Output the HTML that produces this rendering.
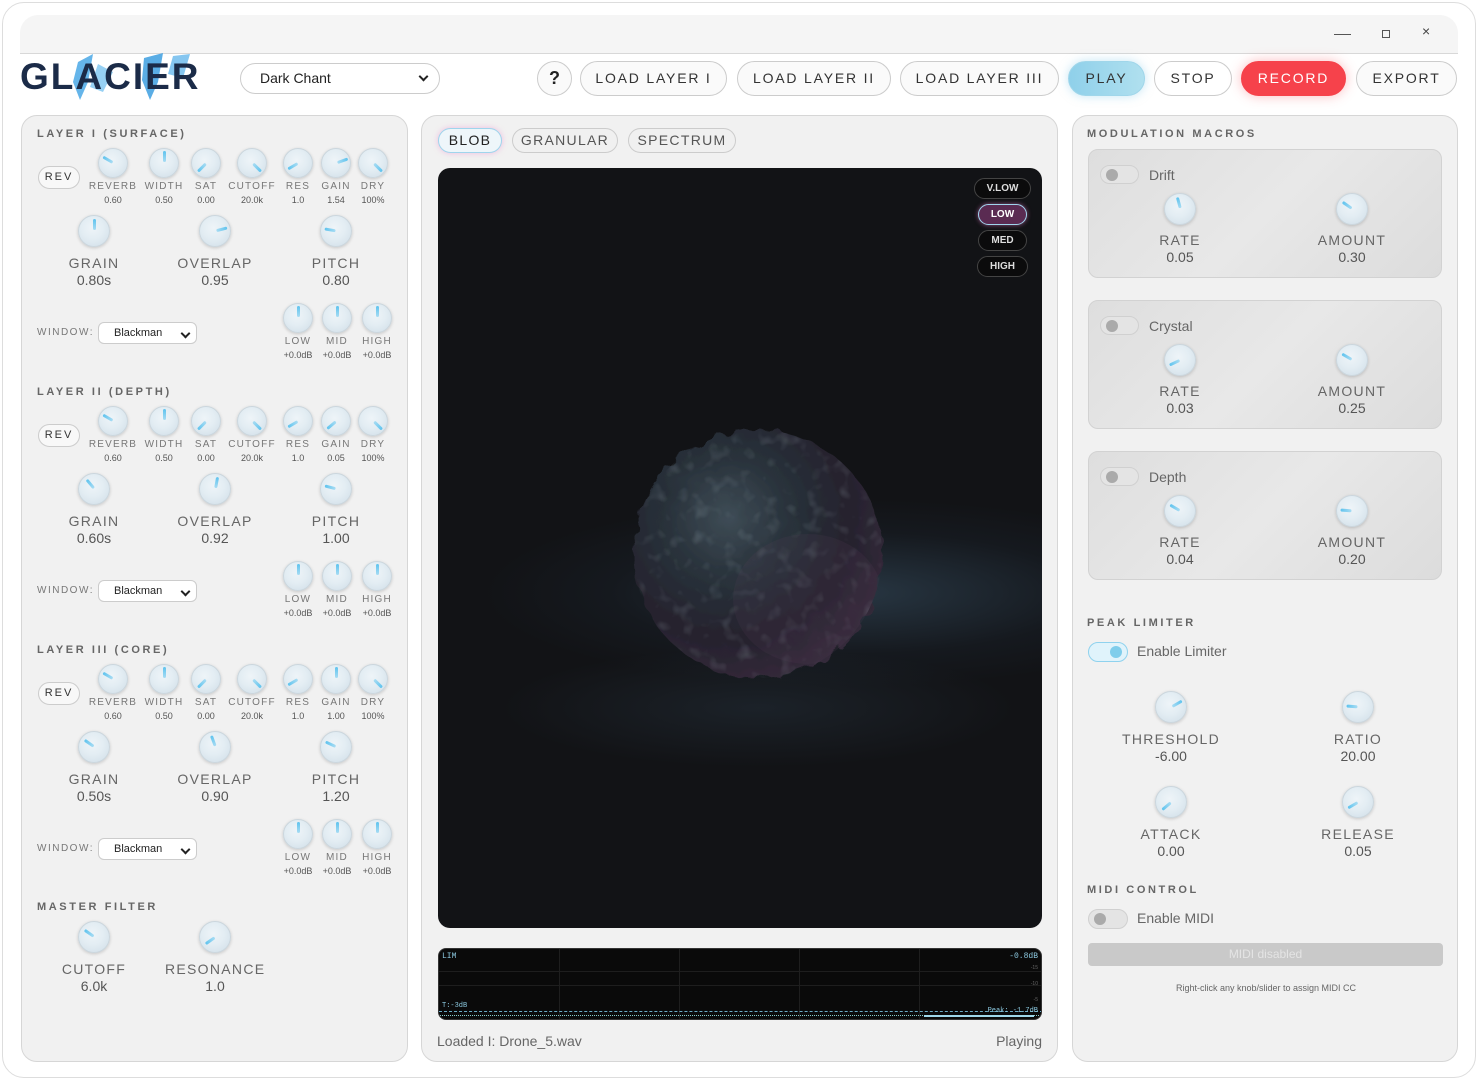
<!DOCTYPE html>
<html><head><meta charset="utf-8">
<style>
*{box-sizing:border-box;margin:0;padding:0}
body{width:1478px;height:1080px;background:#fff;font-family:"Liberation Sans",sans-serif;position:relative;overflow:hidden;color:#555}
.abs{position:absolute}
.frame{position:absolute;left:2px;top:2px;width:1474px;height:1076px;border:1px solid #ddd;border-radius:22px;background:#fff}
.chrome{position:absolute;left:20px;top:15px;width:1438px;height:39px;background:#f5f5f5;border-bottom:1px solid #d8d8d8;border-radius:18px 18px 0 0}
.btn{position:absolute;top:61px;height:35px;border:1px solid #ccc;border-radius:18px;background:#fafafa;font-size:14px;letter-spacing:1.8px;color:#333;text-align:center;line-height:33px}
.panel{position:absolute;top:115px;height:947px;background:#f1f1f1;border:1px solid #d6d6d6;border-radius:16px;overflow:hidden}
.ttl{position:absolute;font-size:11px;font-weight:bold;letter-spacing:2.6px;color:#666}
.k{width:30px;height:30px;border-radius:50%;margin:0 auto;position:relative;background:radial-gradient(circle at 45% 40%,#eef4f8 0,#e3edf3 45%,#cfdde7 100%);border:1px solid #cbd6dd;box-shadow:0 1px 3px rgba(0,0,0,.18)}
.k.b{width:32px;height:32px}
.k i{position:absolute;left:50%;top:50%;width:3px;height:11px;margin-left:-1.5px;margin-top:-12px;background:linear-gradient(#5ec3ee,#a8dcf3);border-radius:2px;transform-origin:50% 12px}
.g{position:absolute;width:80px;text-align:center}
.g .l{font-size:10px;letter-spacing:1.2px;color:#777;margin-top:3px;line-height:12px}
.g .v{font-size:9px;color:#555;line-height:12px;margin-top:1px}
.G{position:absolute;width:100px;text-align:center}
.G .l{font-size:14px;letter-spacing:1.3px;color:#666;margin-top:8px;line-height:17px}
.G .v{font-size:14px;color:#555;line-height:17px}
.rev{position:absolute;left:16px;top:50px;width:42px;height:23px;border:1px solid #ccc;border-radius:12px;background:#f8f8f8;font-size:11px;letter-spacing:2px;text-align:center;line-height:21px;color:#333}
.win{position:absolute;left:15px;top:211px;font-size:10px;letter-spacing:1.5px;color:#777}
.sel{position:absolute;left:76px;top:206px;width:99px;height:22px;border:1px solid #ccc;border-radius:6px;background:#fff;font-size:11px;color:#222;padding-left:15px;line-height:20px}
.chev{position:absolute;right:7px;top:7px;width:7px;height:7px;border-right:2px solid #222;border-bottom:2px solid #222;transform:rotate(45deg)}
.layer{position:absolute;left:0;width:386px;height:250px}
.card{position:absolute;left:15px;width:354px;height:129px;background:linear-gradient(135deg,#dedede,#e8e8e8 50%,#dcdcdc);border:1px solid #d2d2d2;border-radius:10px}
.tog{position:absolute;width:39px;height:19px;border-radius:10px;background:#e4e4e4;border:1px solid #d0d0d0}
.tog:after{content:"";position:absolute;left:5px;top:3px;width:12px;height:12px;border-radius:50%;background:#aaa}
.tog.on{background:#e0f3fb;border-color:#8fd2ee}
.tog.on:after{left:auto;right:5px;background:#7fcdeb}
.tab{position:absolute;top:12px;height:25px;border:1px solid #ccc;border-radius:13px;font-size:14px;letter-spacing:1.3px;text-align:center;line-height:23px;color:#555;background:#f0f0f0}
.q{position:absolute;height:21px;border:1px solid #444;border-radius:11px;background:#0b0b0c;color:#ddd;font-size:10px;font-weight:bold;text-align:center;line-height:19px}
</style></head><body>
<div class="frame"></div>
<div class="chrome">
 <div class="abs" style="left:1314px;top:19px;width:17px;height:1px;background:#555"></div>
 <div class="abs" style="left:1362px;top:15px;width:8px;height:8px;border:1px solid #555"></div>
 <div class="abs" style="left:1402px;top:8px;font-size:14px;color:#444">×</div>
</div>

<svg class="abs" style="left:18px;top:52px" width="190" height="52">
 <polygon points="60,10 75,2 70,30 62,48 55,30" fill="#4aa8e6" opacity=".85"/>
 <polygon points="80,12 95,20 85,40 72,35" fill="#7cc4f0" opacity=".8"/>
 <polygon points="126,6 145,1 140,30 132,48 124,28" fill="#3d9fe0" opacity=".85"/>
 <polygon points="155,4 172,2 165,26 150,22" fill="#66b8ec" opacity=".8"/>
 <text x="2" y="37" font-family="Liberation Sans" font-weight="bold" font-size="37" fill="#1b2b48" letter-spacing="2">GLACIER</text>
</svg>
<div class="abs" style="left:240px;top:63px;width:200px;height:31px;border:1px solid #ccc;border-radius:16px;background:#fff;font-size:14px;color:#222;padding-left:19px;line-height:29px">Dark Chant<div class="chev" style="top:9px;right:12px"></div></div>

<div class="btn" style="left:537px;width:35px;font-size:18px;letter-spacing:0;font-weight:bold;color:#222">?</div>
<div class="btn" style="left:580px;width:147px">LOAD LAYER I</div>
<div class="btn" style="left:737px;width:154px">LOAD LAYER II</div>
<div class="btn" style="left:900px;width:159px">LOAD LAYER III</div>
<div class="btn" style="left:1068px;width:77px;background:linear-gradient(90deg,#8fd0ea,#b0e0ef);border-color:#a0d6ea;box-shadow:0 0 10px rgba(140,205,235,.5)">PLAY</div>
<div class="btn" style="left:1154px;width:78px;background:#fff">STOP</div>
<div class="btn" style="left:1241px;width:105px;background:#f6424b;border-color:#f6424b;color:#fff;box-shadow:0 0 12px rgba(246,66,75,.35)">RECORD</div>
<div class="btn" style="left:1356px;width:101px">EXPORT</div>

<div class="panel" style="left:21px;width:387px">
 <div class="layer" style="top:0">
  <div class="ttl" style="left:15px;top:12px">LAYER I (SURFACE)</div>
  <div class="rev">REV</div>
  <div class="g" style="left:51px;top:32px"><div class="k"><i style="transform:rotate(-60deg)"></i></div><div class="l">REVERB</div><div class="v">0.60</div></div>
  <div class="g" style="left:102px;top:32px"><div class="k"><i></i></div><div class="l">WIDTH</div><div class="v">0.50</div></div>
  <div class="g" style="left:144px;top:32px"><div class="k"><i style="transform:rotate(-135deg)"></i></div><div class="l">SAT</div><div class="v">0.00</div></div>
  <div class="g" style="left:190px;top:32px"><div class="k"><i style="transform:rotate(135deg)"></i></div><div class="l">CUTOFF</div><div class="v">20.0k</div></div>
  <div class="g" style="left:236px;top:32px"><div class="k"><i style="transform:rotate(-120deg)"></i></div><div class="l">RES</div><div class="v">1.0</div></div>
  <div class="g" style="left:274px;top:32px"><div class="k"><i style="transform:rotate(70deg)"></i></div><div class="l">GAIN</div><div class="v">1.54</div></div>
  <div class="g" style="left:311px;top:32px"><div class="k"><i style="transform:rotate(135deg)"></i></div><div class="l">DRY</div><div class="v">100%</div></div>
  <div class="G" style="left:22px;top:99px"><div class="k b"><i></i></div><div class="l">GRAIN</div><div class="v">0.80s</div></div>
  <div class="G" style="left:143px;top:99px"><div class="k b"><i style="transform:rotate(75deg)"></i></div><div class="l">OVERLAP</div><div class="v">0.95</div></div>
  <div class="G" style="left:264px;top:99px"><div class="k b"><i style="transform:rotate(-80deg)"></i></div><div class="l">PITCH</div><div class="v">0.80</div></div>
  <div class="win">WINDOW:</div><div class="sel">Blackman<div class="chev"></div></div>
  <div class="g" style="left:236px;top:187px"><div class="k"><i></i></div><div class="l">LOW</div><div class="v">+0.0dB</div></div>
  <div class="g" style="left:275px;top:187px"><div class="k"><i></i></div><div class="l">MID</div><div class="v">+0.0dB</div></div>
  <div class="g" style="left:315px;top:187px"><div class="k"><i></i></div><div class="l">HIGH</div><div class="v">+0.0dB</div></div>
 </div>
 <div class="layer" style="top:258px">
  <div class="ttl" style="left:15px;top:12px">LAYER II (DEPTH)</div>
  <div class="rev">REV</div>
  <div class="g" style="left:51px;top:32px"><div class="k"><i style="transform:rotate(-60deg)"></i></div><div class="l">REVERB</div><div class="v">0.60</div></div>
  <div class="g" style="left:102px;top:32px"><div class="k"><i></i></div><div class="l">WIDTH</div><div class="v">0.50</div></div>
  <div class="g" style="left:144px;top:32px"><div class="k"><i style="transform:rotate(-135deg)"></i></div><div class="l">SAT</div><div class="v">0.00</div></div>
  <div class="g" style="left:190px;top:32px"><div class="k"><i style="transform:rotate(135deg)"></i></div><div class="l">CUTOFF</div><div class="v">20.0k</div></div>
  <div class="g" style="left:236px;top:32px"><div class="k"><i style="transform:rotate(-120deg)"></i></div><div class="l">RES</div><div class="v">1.0</div></div>
  <div class="g" style="left:274px;top:32px"><div class="k"><i style="transform:rotate(-130deg)"></i></div><div class="l">GAIN</div><div class="v">0.05</div></div>
  <div class="g" style="left:311px;top:32px"><div class="k"><i style="transform:rotate(135deg)"></i></div><div class="l">DRY</div><div class="v">100%</div></div>
  <div class="G" style="left:22px;top:99px"><div class="k b"><i style="transform:rotate(-40deg)"></i></div><div class="l">GRAIN</div><div class="v">0.60s</div></div>
  <div class="G" style="left:143px;top:99px"><div class="k b"><i style="transform:rotate(10deg)"></i></div><div class="l">OVERLAP</div><div class="v">0.92</div></div>
  <div class="G" style="left:264px;top:99px"><div class="k b"><i style="transform:rotate(-75deg)"></i></div><div class="l">PITCH</div><div class="v">1.00</div></div>
  <div class="win">WINDOW:</div><div class="sel">Blackman<div class="chev"></div></div>
  <div class="g" style="left:236px;top:187px"><div class="k"><i></i></div><div class="l">LOW</div><div class="v">+0.0dB</div></div>
  <div class="g" style="left:275px;top:187px"><div class="k"><i></i></div><div class="l">MID</div><div class="v">+0.0dB</div></div>
  <div class="g" style="left:315px;top:187px"><div class="k"><i></i></div><div class="l">HIGH</div><div class="v">+0.0dB</div></div>
 </div>
 <div class="layer" style="top:516px">
  <div class="ttl" style="left:15px;top:12px">LAYER III (CORE)</div>
  <div class="rev">REV</div>
  <div class="g" style="left:51px;top:32px"><div class="k"><i style="transform:rotate(-60deg)"></i></div><div class="l">REVERB</div><div class="v">0.60</div></div>
  <div class="g" style="left:102px;top:32px"><div class="k"><i></i></div><div class="l">WIDTH</div><div class="v">0.50</div></div>
  <div class="g" style="left:144px;top:32px"><div class="k"><i style="transform:rotate(-135deg)"></i></div><div class="l">SAT</div><div class="v">0.00</div></div>
  <div class="g" style="left:190px;top:32px"><div class="k"><i style="transform:rotate(135deg)"></i></div><div class="l">CUTOFF</div><div class="v">20.0k</div></div>
  <div class="g" style="left:236px;top:32px"><div class="k"><i style="transform:rotate(-120deg)"></i></div><div class="l">RES</div><div class="v">1.0</div></div>
  <div class="g" style="left:274px;top:32px"><div class="k"><i></i></div><div class="l">GAIN</div><div class="v">1.00</div></div>
  <div class="g" style="left:311px;top:32px"><div class="k"><i style="transform:rotate(135deg)"></i></div><div class="l">DRY</div><div class="v">100%</div></div>
  <div class="G" style="left:22px;top:99px"><div class="k b"><i style="transform:rotate(-55deg)"></i></div><div class="l">GRAIN</div><div class="v">0.50s</div></div>
  <div class="G" style="left:143px;top:99px"><div class="k b"><i style="transform:rotate(-20deg)"></i></div><div class="l">OVERLAP</div><div class="v">0.90</div></div>
  <div class="G" style="left:264px;top:99px"><div class="k b"><i style="transform:rotate(-65deg)"></i></div><div class="l">PITCH</div><div class="v">1.20</div></div>
  <div class="win">WINDOW:</div><div class="sel">Blackman<div class="chev"></div></div>
  <div class="g" style="left:236px;top:187px"><div class="k"><i></i></div><div class="l">LOW</div><div class="v">+0.0dB</div></div>
  <div class="g" style="left:275px;top:187px"><div class="k"><i></i></div><div class="l">MID</div><div class="v">+0.0dB</div></div>
  <div class="g" style="left:315px;top:187px"><div class="k"><i></i></div><div class="l">HIGH</div><div class="v">+0.0dB</div></div>
 </div>
 <div class="ttl" style="left:15px;top:785px">MASTER FILTER</div>
 <div class="G" style="left:22px;top:805px"><div class="k b"><i style="transform:rotate(-55deg)"></i></div><div class="l">CUTOFF</div><div class="v">6.0k</div></div>
 <div class="G" style="left:143px;top:805px"><div class="k b"><i style="transform:rotate(-125deg)"></i></div><div class="l">RESONANCE</div><div class="v">1.0</div></div>
</div>

<div class="panel" style="left:421px;width:637px">
 <div class="tab" style="left:16px;width:64px;background:#eef6fa;border-color:#9fd5ec;box-shadow:0 0 6px rgba(240,150,210,.6);color:#222">BLOB</div>
 <div class="tab" style="left:90px;width:106px">GRANULAR</div>
 <div class="tab" style="left:206px;width:108px">SPECTRUM</div>
 <div class="abs" style="left:16px;top:52px;width:604px;height:760px;background:#121316;border-radius:12px;overflow:hidden">
  <div class="abs" style="left:40px;top:330px;width:620px;height:190px;background:radial-gradient(ellipse at 60% 50%,rgba(80,120,150,.35),rgba(40,60,80,.15) 45%,rgba(0,0,0,0) 70%)"></div>
  <div class="abs" style="left:60px;top:480px;width:520px;height:120px;background:radial-gradient(ellipse at 50% 50%,rgba(70,100,125,.18),rgba(0,0,0,0) 70%)"></div>
  <svg class="abs" style="left:170px;top:236px" width="300" height="300">
   <defs>
    <filter id="rough" x="-10%" y="-10%" width="120%" height="120%">
     <feTurbulence type="fractalNoise" baseFrequency="0.06" numOctaves="2" seed="3" result="n"/>
     <feDisplacementMap in="SourceGraphic" in2="n" scale="14"/>
    </filter>
    <filter id="tex">
     <feTurbulence type="fractalNoise" baseFrequency="0.07" numOctaves="2" seed="7"/>
     <feColorMatrix values="0 0 0 0 0.45  0 0 0 0 0.55  0 0 0 0 0.6  0 0 0 1.4 -0.75"/>
    </filter>
    <radialGradient id="bg" cx="38%" cy="35%" r="70%">
     <stop offset="0" stop-color="#3e4c56"/>
     <stop offset=".35" stop-color="#29323b"/>
     <stop offset=".7" stop-color="#25222d"/>
     <stop offset="1" stop-color="#352a3b"/>
    </radialGradient>
    <clipPath id="cp"><circle cx="150" cy="150" r="124"/></clipPath>
   </defs>
   <g filter="url(#rough)">
    <circle cx="150" cy="150" r="124" fill="url(#bg)"/>
   </g>
   <g clip-path="url(#cp)">
    <rect width="300" height="300" filter="url(#tex)" opacity=".35"/>
    <ellipse cx="200" cy="195" rx="75" ry="65" fill="#5e4260" opacity=".15"/>
   </g>
  </svg>
  <div class="q" style="left:536px;top:10px;width:57px">V.LOW</div>
  <div class="q" style="left:540px;top:36px;width:49px;background:#5a2b52;border-color:#9fd5ec;box-shadow:0 0 5px rgba(230,120,200,.6);color:#fff">LOW</div>
  <div class="q" style="left:540px;top:62px;width:49px">MED</div>
  <div class="q" style="left:539px;top:88px;width:51px">HIGH</div>
 </div>
 <div class="abs" style="left:16px;top:832px;width:604px;height:72px;background:#0a0a0a;border-radius:8px;overflow:hidden;border:1px solid #333">
  <div class="abs" style="left:0;top:22px;width:604px;height:1px;background:#1e1e1e"></div>
  <div class="abs" style="left:0;top:36px;width:604px;height:1px;background:#1e1e1e"></div>
  <div class="abs" style="left:120px;top:0;width:1px;height:72px;background:#1e1e1e"></div>
  <div class="abs" style="left:240px;top:0;width:1px;height:72px;background:#1e1e1e"></div>
  <div class="abs" style="left:360px;top:0;width:1px;height:72px;background:#1e1e1e"></div>
  <div class="abs" style="left:480px;top:0;width:1px;height:72px;background:#1e1e1e"></div>
  <div class="abs" style="left:0;top:62px;width:604px;border-top:1px dashed #6aa9c4"></div>
  <div class="abs" style="left:0;top:66px;width:604px;border-top:1px dotted #8cc"></div>
  <div class="abs" style="left:485px;top:66px;width:110px;height:2px;background:#9fd8ea"></div>
  <div class="abs" style="left:3px;top:3px;font-family:'Liberation Mono',monospace;font-size:8px;color:#8cc9e0">LIM</div>
  <div class="abs" style="right:3px;top:3px;font-family:'Liberation Mono',monospace;font-size:8px;color:#8cc9e0">-0.8dB</div>
  <div class="abs" style="left:3px;top:53px;font-family:'Liberation Mono',monospace;font-size:7px;color:#8cc9e0">T:-3dB</div>
  <div class="abs" style="right:3px;top:58px;font-family:'Liberation Mono',monospace;font-size:7px;color:#8cc9e0">Peak: -1.7dB</div>
  <div class="abs" style="right:3px;top:16px;font-size:5px;color:#666">-15</div>
  <div class="abs" style="right:3px;top:32px;font-size:5px;color:#666">-10</div>
  <div class="abs" style="right:3px;top:48px;font-size:5px;color:#666">-5</div>
 </div>
 <div class="abs" style="left:15px;top:917px;font-size:14px;color:#666">Loaded I: Drone_5.wav</div>
 <div class="abs" style="right:15px;top:917px;font-size:14px;color:#666">Playing</div>
</div>

<div class="panel" style="left:1072px;width:386px">
 <div class="ttl" style="left:14px;top:12px">MODULATION MACROS</div>
 <div class="card" style="top:33px">
  <div class="tog" style="left:11px;top:15px"></div><div class="abs" style="left:60px;top:17px;font-size:14px;color:#666">Drift</div>
  <div class="G" style="left:41px;top:43px"><div class="k b"><i style="transform:rotate(-15deg)"></i></div><div class="l" style="margin-top:7px">RATE</div><div class="v">0.05</div></div>
  <div class="G" style="left:213px;top:43px"><div class="k b"><i style="transform:rotate(-55deg)"></i></div><div class="l" style="margin-top:7px">AMOUNT</div><div class="v">0.30</div></div>
 </div>
 <div class="card" style="top:184px">
  <div class="tog" style="left:11px;top:15px"></div><div class="abs" style="left:60px;top:17px;font-size:14px;color:#666">Crystal</div>
  <div class="G" style="left:41px;top:43px"><div class="k b"><i style="transform:rotate(-115deg)"></i></div><div class="l" style="margin-top:7px">RATE</div><div class="v">0.03</div></div>
  <div class="G" style="left:213px;top:43px"><div class="k b"><i style="transform:rotate(-60deg)"></i></div><div class="l" style="margin-top:7px">AMOUNT</div><div class="v">0.25</div></div>
 </div>
 <div class="card" style="top:335px">
  <div class="tog" style="left:11px;top:15px"></div><div class="abs" style="left:60px;top:17px;font-size:14px;color:#666">Depth</div>
  <div class="G" style="left:41px;top:43px"><div class="k b"><i style="transform:rotate(-60deg)"></i></div><div class="l" style="margin-top:7px">RATE</div><div class="v">0.04</div></div>
  <div class="G" style="left:213px;top:43px"><div class="k b"><i style="transform:rotate(-85deg)"></i></div><div class="l" style="margin-top:7px">AMOUNT</div><div class="v">0.20</div></div>
 </div>
 <div class="ttl" style="left:14px;top:501px">PEAK LIMITER</div>
 <div class="tog on" style="left:15px;top:526px;width:40px;height:20px"></div>
 <div class="abs" style="left:64px;top:527px;font-size:14px;color:#666">Enable Limiter</div>
 <div class="G" style="left:48px;top:575px"><div class="k b"><i style="transform:rotate(60deg)"></i></div><div class="l">THRESHOLD</div><div class="v">-6.00</div></div>
 <div class="G" style="left:235px;top:575px"><div class="k b"><i style="transform:rotate(-85deg)"></i></div><div class="l">RATIO</div><div class="v">20.00</div></div>
 <div class="G" style="left:48px;top:670px"><div class="k b"><i style="transform:rotate(-130deg)"></i></div><div class="l">ATTACK</div><div class="v">0.00</div></div>
 <div class="G" style="left:235px;top:670px"><div class="k b"><i style="transform:rotate(-120deg)"></i></div><div class="l">RELEASE</div><div class="v">0.05</div></div>
 <div class="ttl" style="left:14px;top:768px">MIDI CONTROL</div>
 <div class="tog" style="left:15px;top:793px;width:40px;height:20px"></div>
 <div class="abs" style="left:64px;top:794px;font-size:14px;color:#666">Enable MIDI</div>
 <div class="abs" style="left:15px;top:827px;width:355px;height:23px;background:#c9c9c9;border-radius:4px;font-size:12px;color:#e4e4e4;text-align:center;line-height:23px">MIDI disabled</div>
 <div class="abs" style="left:0;top:867px;width:386px;text-align:center;font-size:9px;color:#666">Right-click any knob/slider to assign MIDI CC</div>
</div>
</body></html>
